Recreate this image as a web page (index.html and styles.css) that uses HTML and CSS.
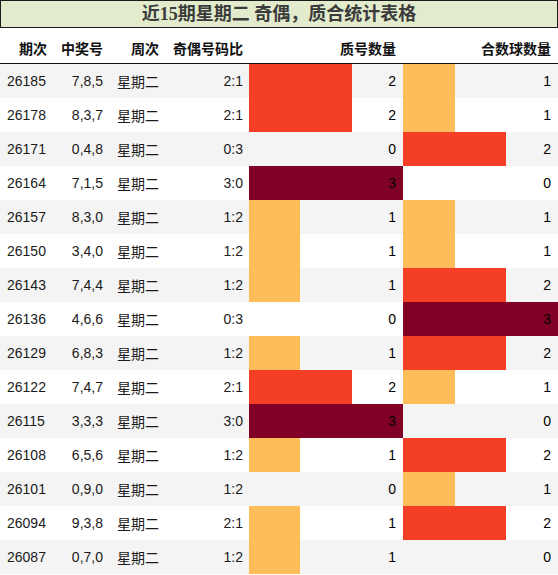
FILE: index.html
```html
<!DOCTYPE html>
<html lang="zh">
<head>
<meta charset="utf-8">
<title>近15期星期二 奇偶，质合统计表格</title>
<link rel="stylesheet" href="styles.css">
</head>
<body>
<div class="page">
  <div class="title">近15期星期二 奇偶，质合统计表格</div>
  <table class="stats">
    <colgroup>
      <col class="c-issue"><col class="c-nums"><col class="c-week"><col class="c-ratio"><col class="c-bar"><col class="c-bar2">
    </colgroup>
    <thead>
      <tr>
        <th>期次</th><th>中奖号</th><th>周次</th><th>奇偶号码比</th><th>质号数量</th><th>合数球数量</th>
      </tr>
    </thead>
    <tbody>
      <tr><td class="issue">26185</td><td class="num">7,8,5</td><td class="week">星期二</td><td class="num">2:1</td>
        <td class="barcell"><div class="barwrap"><div class="bar v2" style="width:66.667%"></div><span class="val">2</span></div></td>
        <td class="barcell"><div class="barwrap"><div class="bar v1" style="width:33.333%"></div><span class="val">1</span></div></td></tr>
      <tr><td class="issue">26178</td><td class="num">8,3,7</td><td class="week">星期二</td><td class="num">2:1</td>
        <td class="barcell"><div class="barwrap"><div class="bar v2" style="width:66.667%"></div><span class="val">2</span></div></td>
        <td class="barcell"><div class="barwrap"><div class="bar v1" style="width:33.333%"></div><span class="val">1</span></div></td></tr>
      <tr><td class="issue">26171</td><td class="num">0,4,8</td><td class="week">星期二</td><td class="num">0:3</td>
        <td class="barcell"><div class="barwrap"><div class="bar" style="width:0%"></div><span class="val">0</span></div></td>
        <td class="barcell"><div class="barwrap"><div class="bar v2" style="width:66.667%"></div><span class="val">2</span></div></td></tr>
      <tr><td class="issue">26164</td><td class="num">7,1,5</td><td class="week">星期二</td><td class="num">3:0</td>
        <td class="barcell"><div class="barwrap"><div class="bar v3" style="width:100%"></div><span class="val">3</span></div></td>
        <td class="barcell"><div class="barwrap"><div class="bar" style="width:0%"></div><span class="val">0</span></div></td></tr>
      <tr><td class="issue">26157</td><td class="num">8,3,0</td><td class="week">星期二</td><td class="num">1:2</td>
        <td class="barcell"><div class="barwrap"><div class="bar v1" style="width:33.333%"></div><span class="val">1</span></div></td>
        <td class="barcell"><div class="barwrap"><div class="bar v1" style="width:33.333%"></div><span class="val">1</span></div></td></tr>
      <tr><td class="issue">26150</td><td class="num">3,4,0</td><td class="week">星期二</td><td class="num">1:2</td>
        <td class="barcell"><div class="barwrap"><div class="bar v1" style="width:33.333%"></div><span class="val">1</span></div></td>
        <td class="barcell"><div class="barwrap"><div class="bar v1" style="width:33.333%"></div><span class="val">1</span></div></td></tr>
      <tr><td class="issue">26143</td><td class="num">7,4,4</td><td class="week">星期二</td><td class="num">1:2</td>
        <td class="barcell"><div class="barwrap"><div class="bar v1" style="width:33.333%"></div><span class="val">1</span></div></td>
        <td class="barcell"><div class="barwrap"><div class="bar v2" style="width:66.667%"></div><span class="val">2</span></div></td></tr>
      <tr><td class="issue">26136</td><td class="num">4,6,6</td><td class="week">星期二</td><td class="num">0:3</td>
        <td class="barcell"><div class="barwrap"><div class="bar" style="width:0%"></div><span class="val">0</span></div></td>
        <td class="barcell"><div class="barwrap"><div class="bar v3" style="width:100%"></div><span class="val">3</span></div></td></tr>
      <tr><td class="issue">26129</td><td class="num">6,8,3</td><td class="week">星期二</td><td class="num">1:2</td>
        <td class="barcell"><div class="barwrap"><div class="bar v1" style="width:33.333%"></div><span class="val">1</span></div></td>
        <td class="barcell"><div class="barwrap"><div class="bar v2" style="width:66.667%"></div><span class="val">2</span></div></td></tr>
      <tr><td class="issue">26122</td><td class="num">7,4,7</td><td class="week">星期二</td><td class="num">2:1</td>
        <td class="barcell"><div class="barwrap"><div class="bar v2" style="width:66.667%"></div><span class="val">2</span></div></td>
        <td class="barcell"><div class="barwrap"><div class="bar v1" style="width:33.333%"></div><span class="val">1</span></div></td></tr>
      <tr><td class="issue">26115</td><td class="num">3,3,3</td><td class="week">星期二</td><td class="num">3:0</td>
        <td class="barcell"><div class="barwrap"><div class="bar v3" style="width:100%"></div><span class="val">3</span></div></td>
        <td class="barcell"><div class="barwrap"><div class="bar" style="width:0%"></div><span class="val">0</span></div></td></tr>
      <tr><td class="issue">26108</td><td class="num">6,5,6</td><td class="week">星期二</td><td class="num">1:2</td>
        <td class="barcell"><div class="barwrap"><div class="bar v1" style="width:33.333%"></div><span class="val">1</span></div></td>
        <td class="barcell"><div class="barwrap"><div class="bar v2" style="width:66.667%"></div><span class="val">2</span></div></td></tr>
      <tr><td class="issue">26101</td><td class="num">0,9,0</td><td class="week">星期二</td><td class="num">1:2</td>
        <td class="barcell"><div class="barwrap"><div class="bar" style="width:0%"></div><span class="val">0</span></div></td>
        <td class="barcell"><div class="barwrap"><div class="bar v1" style="width:33.333%"></div><span class="val">1</span></div></td></tr>
      <tr><td class="issue">26094</td><td class="num">9,3,8</td><td class="week">星期二</td><td class="num">2:1</td>
        <td class="barcell"><div class="barwrap"><div class="bar v1" style="width:33.333%"></div><span class="val">1</span></div></td>
        <td class="barcell"><div class="barwrap"><div class="bar v2" style="width:66.667%"></div><span class="val">2</span></div></td></tr>
      <tr><td class="issue">26087</td><td class="num">0,7,0</td><td class="week">星期二</td><td class="num">1:2</td>
        <td class="barcell"><div class="barwrap"><div class="bar v1" style="width:33.333%"></div><span class="val">1</span></div></td>
        <td class="barcell"><div class="barwrap"><div class="bar" style="width:0%"></div><span class="val">0</span></div></td></tr>
    </tbody>
  </table>
</div>
</body>
</html>
```
FILE: styles.css
```css
html, body {
  margin: 0;
  padding: 0;
  background: #ffffff;
}

.page {
  width: 558px;
  font-family: "Liberation Sans", "Noto Sans CJK SC", sans-serif;
  color: #1a1a1a;
}

.title {
  box-sizing: border-box;
  height: 28px;
  border: 1px solid #1c1c1c;
  background: #e2ebcc;
  color: #3b3b3b;
  font-family: "Liberation Serif", "Noto Sans CJK SC", serif;
  font-weight: bold;
  font-size: 18px;
  line-height: 26px;
  text-align: center;
}

.stats {
  width: 558px;
  table-layout: fixed;
  border-collapse: collapse;
  border-spacing: 0;
  font-size: 14px;
}

.c-issue { width: 54px; }
.c-nums { width: 56px; }
.c-week { width: 56px; }
.c-ratio { width: 83px; }
.c-bar { width: 154px; }
.c-bar2 { width: 155px; }

.stats th {
  height: 35px;
  padding: 5px 7px 0 0;
  text-align: right;
  font-weight: bold;
  color: #111111;
  border-bottom: 1px solid #111111;
  white-space: nowrap;
  box-sizing: border-box;
}

.stats th:nth-child(4) { padding-right: 6px; }

.stats td {
  height: 34px;
  padding: 0 7px 0 0;
  box-sizing: border-box;
  text-align: right;
  white-space: nowrap;
  vertical-align: middle;
}

.stats tbody tr:nth-child(odd) { background: #f4f4f4; }
.stats tbody tr:nth-child(even) { background: #ffffff; }

.stats td.issue {
  text-align: left;
  padding-left: 7px;
}

.stats td.week {
  text-align: left;
  padding-left: 7px;
}

.stats td.num:nth-child(4) { padding-right: 6px; }

.stats td.barcell {
  padding: 0;
}

.barwrap {
  display: grid;
  grid-template-columns: 100%;
  grid-template-rows: 34px;
}

.bar {
  grid-area: 1 / 1;
  height: 34px;
  justify-self: start;
}

.bar.v1 { background: #fdbd59; }
.bar.v2 { background: #f43e26; }
.bar.v3 { background: #800026; }

.val {
  grid-area: 1 / 1;
  justify-self: end;
  align-self: center;
  padding-right: 7px;
  color: #000000;
}
```
